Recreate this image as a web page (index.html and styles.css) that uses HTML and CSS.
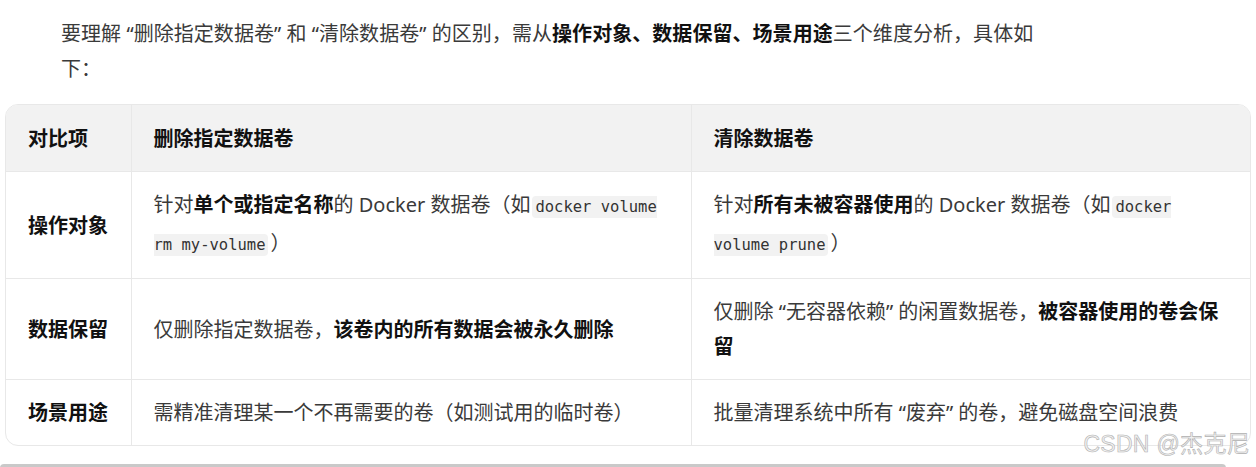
FILE: index.html
```html
<!DOCTYPE html>
<html lang="zh-CN">
<head>
<meta charset="utf-8">
<title>删除指定数据卷与清除数据卷</title>
<link rel="stylesheet" href="styles.css">
</head>
<body>
<div class="page">
  <p class="intro">要理解 “删除指定数据卷” 和 “清除数据卷” 的区别，需从<strong>操作对象、数据保留、场景用途</strong>三个维度分析，具体如下：</p>
  <div class="table-wrap">
    <table class="cmp">
      <colgroup>
        <col class="c1">
        <col class="c2">
        <col class="c3">
      </colgroup>
      <thead>
        <tr>
          <th>对比项</th>
          <th>删除指定数据卷</th>
          <th>清除数据卷</th>
        </tr>
      </thead>
      <tbody>
        <tr>
          <th>操作对象</th>
          <td>针对<strong>单个或指定名称</strong>的 Docker 数据卷（如<code>docker volume rm my-volume</code>）</td>
          <td>针对<strong>所有未被容器使用</strong>的 Docker 数据卷（如<code>docker volume prune</code>）</td>
        </tr>
        <tr>
          <th>数据保留</th>
          <td>仅删除指定数据卷，<strong>该卷内的所有数据会被永久删除</strong></td>
          <td>仅删除 “无容器依赖” 的闲置数据卷，<strong>被容器使用的卷会保留</strong></td>
        </tr>
        <tr>
          <th>场景用途</th>
          <td>需精准清理某一个不再需要的卷（如测试用的临时卷）</td>
          <td>批量清理系统中所有 “废弃” 的卷，避免磁盘空间浪费</td>
        </tr>
      </tbody>
    </table>
  </div>
  <div class="scrollbar"></div>
  <div class="watermark">CSDN @杰克尼</div>
</div>
</body>
</html>
```

FILE: styles.css
```css
html, body {
  margin: 0;
  padding: 0;
  background: #ffffff;
}

body {
  font-family: "Noto Sans", "Noto Sans CJK SC", sans-serif;
  font-size: 20px;
  color: #3a3a3a;
  overflow: hidden;
}

.page {
  position: relative;
  height: 467px;
  padding-top: 16px;
  box-sizing: border-box;
}

.intro {
  margin: 0 0 18px 61px;
  width: 985px;
  line-height: 35px;
  letter-spacing: 0.05px;
}

strong {
  font-weight: 700;
  color: #111111;
}

.table-wrap {
  margin-left: 5px;
  width: 1246px;
  border: 1px solid #e8e8e8;
  border-radius: 13px;
  overflow: hidden;
  box-sizing: border-box;
}

.cmp {
  width: 100%;
  border-collapse: collapse;
  table-layout: fixed;
}

.c1 { width: 125px; }
.c2 { width: 560px; }
.c3 { width: 559px; }

.cmp th,
.cmp td {
  padding: 15px 22px;
  line-height: 35px;
  text-align: left;
  vertical-align: middle;
  border-left: 1px solid #e8e8e8;
  border-top: 1px solid #e8e8e8;
}

.cmp tr > :first-child {
  border-left: none;
}

.cmp thead th {
  border-top: none;
  background: #f2f2f2;
  padding-top: 16px;
  font-weight: 700;
  color: #111111;
}

.cmp tbody th {
  font-weight: 700;
  color: #111111;
}

code {
  font-family: "DejaVu Sans Mono", monospace;
  font-size: 15.5px;
  background: #f2f2f2;
  border-radius: 4px;
  padding: 2px 3px;
  margin: 0 2px;
  color: #333333;
}

.scrollbar {
  margin-top: 18px;
  width: 1226px;
  height: 8px;
  background: #c9c9c9;
  border-radius: 4px;
}

.watermark {
  position: absolute;
  right: 6px;
  bottom: 8px;
  font-family: "Liberation Sans", "Noto Sans CJK SC", sans-serif;
  font-size: 23px;
  color: rgba(240, 240, 240, 0.9);
  -webkit-text-stroke: 0.6px #b0b0b0;
  letter-spacing: 0.3px;
}
```
